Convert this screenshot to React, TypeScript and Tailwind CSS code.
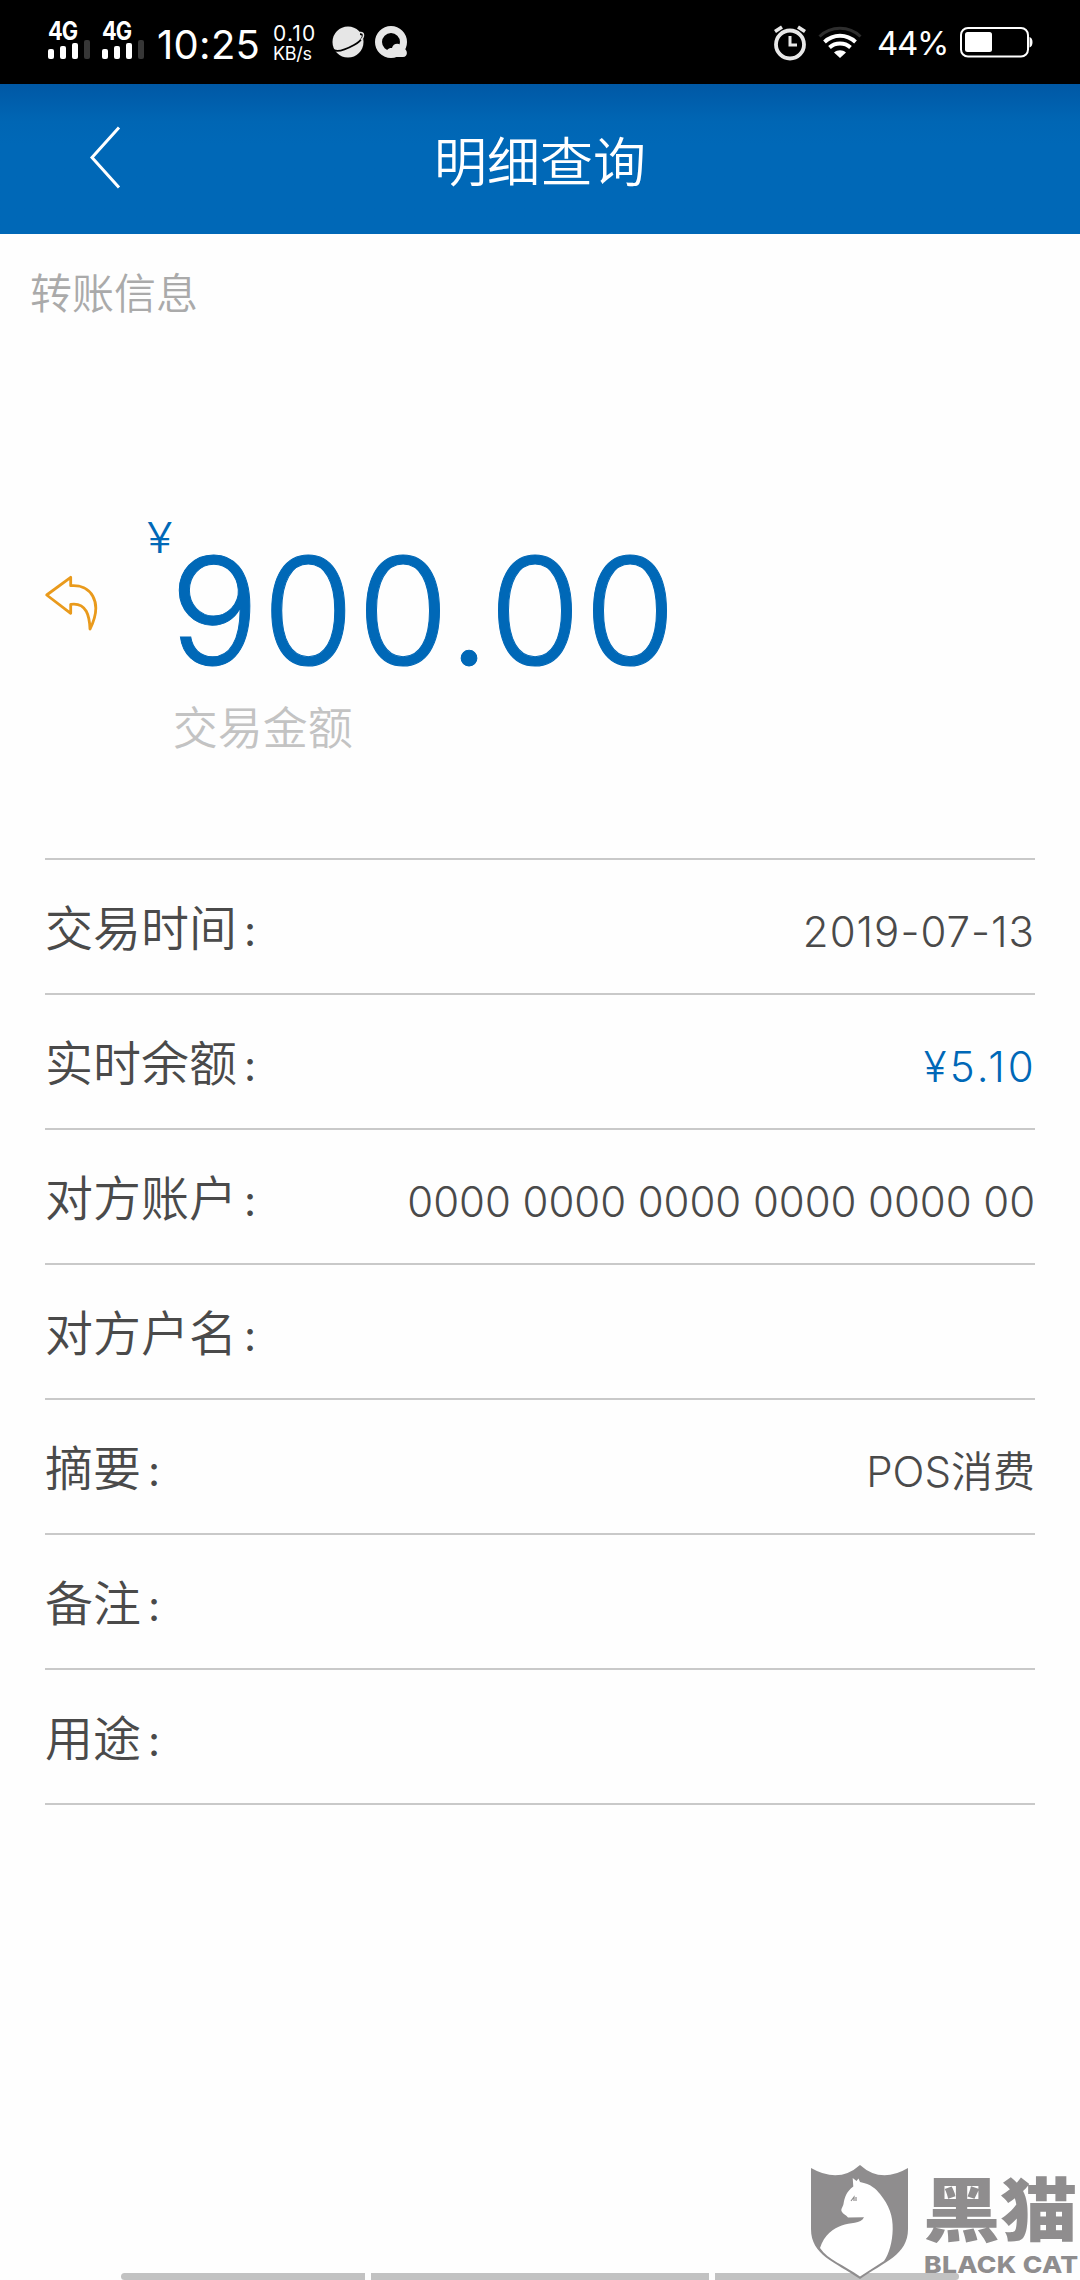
import type { ReactNode } from 'react'

// =============================================================================
// Transfer detail screen
// =============================================================================

interface DetailRow {
  label: string
  value?: string
  valueClass?: string
}

const ROWS: DetailRow[] = [
  { label: '交易时间', value: '2019-07-13', valueClass: 'tracking-[1px]' },
  { label: '实时余额', value: '¥5.10', valueClass: '-mr-[2px] tracking-[3.2px] text-[#0068b7]' },
  { label: '对方账户', value: '0000 0000 0000 0000 0000 00', valueClass: 'tracking-[-0.08px]' },
  { label: '对方户名' },
  { label: '摘要', value: 'POS消费' },
  { label: '备注' },
  { label: '用途' },
]

function Signal() {
  return (
    <div className="flex h-[36px] w-[42px] flex-col justify-between">
      <span className="origin-left scale-x-[0.87] text-[25px] leading-[18px] font-bold tracking-[-1px]">4G</span>
      <div className="flex items-end gap-[6px]">
        <div className="h-[10px] w-[6px] rounded-[2px] bg-white" />
        <div className="h-[13px] w-[6px] rounded-[2px] bg-white" />
        <div className="h-[16px] w-[6px] rounded-[2px] bg-white" />
        <div className="h-[19px] w-[6px] rounded-[2px] bg-[#363636]" />
      </div>
    </div>
  )
}

function PlanetIcon() {
  return (
    <svg width="33" height="34" viewBox="0 0 33 34">
      <circle cx="16" cy="17" r="15.5" fill="#e6e6e6" />
      <path d="M28 9C33 9 31 15 22 20C13 25 4 28 0 24" fill="none" stroke="#000" strokeWidth="1.8" />
      <path d="M28 7.500C32 7 33 11 29 15" fill="none" stroke="#e6e6e6" strokeWidth="1.400" />
    </svg>
  )
}

function BrowserIcon() {
  return (
    <svg width="32" height="32" viewBox="0 0 32 32">
      <circle cx="16" cy="16" r="12.500" fill="none" stroke="#e6e6e6" strokeWidth="7" />
      <path
        d="M12 31C9 27 12 21.500 17 22C18 16.500 26 16 27.500 22C33 22.500 33.500 31 28 31Z"
        fill="#e6e6e6"
      />
    </svg>
  )
}

function AlarmIcon() {
  return (
    <svg width="34" height="36" viewBox="0 0 34 36" fill="none" stroke="#e8e8e8">
      <circle cx="17" cy="19.500" r="14" strokeWidth="3.800" />
      <path d="M17 11V20H24" strokeWidth="3" />
      <path d="M2 6.500L9 2M32 6.500L25 2" strokeWidth="3.600" />
    </svg>
  )
}

function WifiIcon() {
  return (
    <svg width="44" height="33" viewBox="0 0 44 33" fill="none" strokeWidth="4">
      <path d="M1.500 10.500C13 -0.500 31 -0.500 42.500 10.500" stroke="#2e2e2e" strokeWidth="3" />
      <path d="M6.500 16C15.500 7.800 28.500 7.800 37.500 16" stroke="#fff" />
      <path d="M11.500 21.500C17.500 16.300 26.500 16.300 32.500 21.500" stroke="#fff" />
      <path d="M16 26.500C19.500 23.500 24.500 23.500 28 26.500L22 32Z" fill="#fff" stroke="none" />
    </svg>
  )
}

function BatteryIcon() {
  return (
    <svg width="73" height="31" viewBox="0 0 73 31">
      <rect x="1" y="1" width="67" height="28.500" rx="7" fill="none" stroke="#fff" strokeWidth="2" />
      <rect x="5" y="5" width="27" height="20" rx="2.500" fill="#fff" />
      <path d="M69.500 10Q72.500 11 72.500 15Q72.500 19.500 69.500 20.500Z" fill="#fff" />
    </svg>
  )
}

function StatusBar() {
  return (
    <header className="flex h-[84px] items-start bg-black text-white">
      <div className="mt-[22px] ml-[48px] flex gap-[12px]">
        <Signal />
        <Signal />
      </div>
      <span className="mt-[20px] ml-[13px] w-[102px] text-[40px] leading-[49px] tracking-[0.3px] whitespace-nowrap">
        10:25
      </span>
      <div className="mt-[23px] ml-[14px] flex w-[44px] flex-col">
        <span className="text-[21px] leading-[21px] tracking-[1.2px]">0.10</span>
        <span className="text-[18px] leading-[19px] tracking-[-0.3px]">KB/s</span>
      </div>
      <div className="mt-[25px] ml-[15px]">
        <PlanetIcon />
      </div>
      <div className="mt-[26px] ml-[10px]">
        <BrowserIcon />
      </div>
      <div className="mr-[47px] ml-auto flex items-start">
        <div className="mt-[25px]">
          <AlarmIcon />
        </div>
        <div className="mt-[26px] ml-[11px]">
          <WifiIcon />
        </div>
        <span className="mt-[23px] ml-[15px] w-[83px] text-[33px] leading-[40px] tracking-[-1.3px] whitespace-nowrap">
          44%
        </span>
        <div className="mt-[27px]">
          <BatteryIcon />
        </div>
      </div>
    </header>
  )
}

function TitleBar({ children }: { children: ReactNode }) {
  return (
    <div className="grid h-[150px] grid-cols-[1fr_auto_1fr] items-start bg-[#0068b7] bg-linear-to-b from-[#0058a5] via-[#0066b4] via-25% to-[#0068b7] to-40% text-white">
      <svg className="mt-[42px] ml-[88px]" width="34" height="64" viewBox="0 0 34 64" fill="none">
        <path d="M31 1.500L4 31.500L31 61.500" stroke="#fff" strokeWidth="3" />
      </svg>
      <h1 className="mt-[39px] text-[53px] leading-[80px] font-[350]">{children}</h1>
    </div>
  )
}

function Amount() {
  return (
    <section className="mt-[189px] flex h-[333px] items-start text-[#0068b7]">
      <svg className="mt-[62px] ml-[44px]" width="56" height="56" viewBox="0 0 56 56" fill="none">
        <path
          d="M2.700 20L26.700 2.300V10.700C46 9 60 26 46 54C45.500 42 43 27 26.700 29.300V38.300Z"
          stroke="#e99a1c"
          strokeWidth="2.800"
          strokeLinejoin="round"
        />
      </svg>
      <span className="ml-[47px] origin-left scale-x-[1.12] text-[42px] leading-[50px] font-light">¥</span>
      <div className="flex flex-col">
        <span className="mt-[18px] text-[149px] leading-[160px] font-light tracking-[2.8px] [-webkit-text-stroke:1px_#0068b7]">
          900.00
        </span>
        <span className="mt-[8px] ml-[3px] text-[45px] leading-[60px] font-[350] text-[#c3c3c3]">交易金额</span>
      </div>
    </section>
  )
}

function Row({ label, value, valueClass = '' }: DetailRow) {
  return (
    <div className="flex h-[135px] items-center justify-between border-b-2 border-[#c9c9c9] text-[#4a4a4a]">
      <span className="pt-[6px] text-[48px] leading-[70px] font-[350]">
        {label}
        <span className="ml-[7px] text-[42px] font-normal">:</span>
      </span>
      <span className={`pt-[10px] text-[42px] leading-[50px] font-[350] ${valueClass}`}>{value}</span>
    </div>
  )
}

function Watermark() {
  return (
    <div className="absolute right-0 bottom-0 flex h-[116px] w-[270px] items-start text-[#8f8d8e]">
      <svg width="99" height="116" viewBox="0 0 99 116">
        <path
          d="M1 4Q29 20 50 1Q71 20 98 4V65C98 91 74 98 50 115C25 98 1 91 1 65Z"
          fill="currentColor"
        />
        <path
          d="M42.700 14L46.500 17L48.500 14.500L50 18C61 20 66 25 70 30C79 41 83 52 82.700 65C82.500 78 79 90 74 97L50 112.500C34 101 18 96 10 84C14 71 24 64 31.700 61.500C40 58.500 51 60 54 53.300L38 53.500C36 51 33 50 31.700 47.500C30.500 45 33 43 33.500 40C34.500 34 36 28 43.300 22.500Z"
          fill="#fff"
        />
        <path d="M41 37L44 33V37M46 33V37" fill="none" stroke="currentColor" strokeWidth="1.200" />
      </svg>
      <div className="ml-[14px] flex flex-col">
        <span className="mt-[5px] origin-left scale-x-[1.12] text-[69px] leading-[84px] font-black whitespace-nowrap">
          黑猫
        </span>
        <span className="-mt-[2px] ml-[1px] origin-left scale-x-[1.15] text-[23px] leading-[28px] font-extrabold tracking-[0.3px] whitespace-nowrap">
          BLACK CAT
        </span>
      </div>
    </div>
  )
}

export default function App() {
  return (
    <div className="relative flex h-[2280px] w-[1080px] flex-col overflow-hidden bg-[#fefefe] font-['Inter','Noto_Sans_CJK_SC',sans-serif]">
      <StatusBar />
      <TitleBar>明细查询</TitleBar>
      <p className="mt-[30px] ml-[30px] text-[42px] leading-[60px] font-[350] text-[#aaaaaa]">转账信息</p>
      <Amount />
      <main className="mx-[45px] mt-[12px] border-t-2 border-[#c9c9c9]">
        {ROWS.map((row) => (
          <Row key={row.label} {...row} />
        ))}
      </main>
      <footer className="mx-[121px] mt-auto flex h-[7px] gap-[6px]">
        <div className="w-[244px] rounded-l-full bg-[#c2c2c2]" />
        <div className="w-[338px] bg-[#c2c2c2]" />
        <div className="w-[244px] rounded-r-full bg-[#c2c2c2]" />
      </footer>
      <Watermark />
    </div>
  )
}
